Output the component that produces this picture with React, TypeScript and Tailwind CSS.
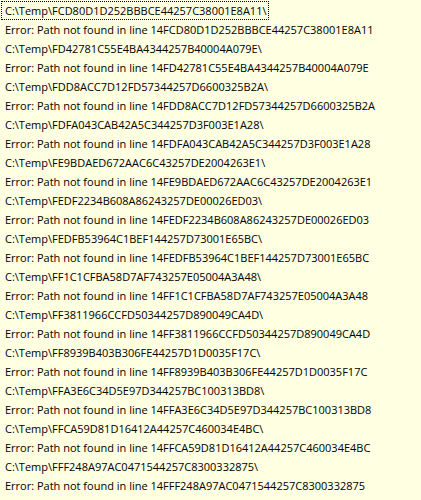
const ids = [
  "FCD80D1D252BBBCE44257C38001E8A11",
  "FD42781C55E4BA4344257B40004A079E",
  "FDD8ACC7D12FD57344257D6600325B2A",
  "FDFA043CAB42A5C344257D3F003E1A28",
  "FE9BDAED672AAC6C43257DE2004263E1",
  "FEDF2234B608A86243257DE00026ED03",
  "FEDFB53964C1BEF144257D73001E65BC",
  "FF1C1CFBA58D7AF743257E05004A3A48",
  "FF3811966CCFD50344257D890049CA4D",
  "FF8939B403B306FE44257D1D0035F17C",
  "FFA3E6C34D5E97D344257BC100313BD8",
  "FFCA59D81D16412A44257C460034E4BC",
  "FFF248A97AC0471544257C8300332875",
];

const lines = ids.flatMap((id) => [
  `C:\\Temp\\${id}\\`,
  `Error: Path not found in line 14${id}`,
]);

const App = () => {
  return (
    <div className="w-[421px] h-[500px] overflow-hidden bg-[#ffffe1] pt-px font-['Open_Sans',sans-serif] text-[11px] text-black whitespace-nowrap">
      {lines.map((line, i) =>
        i === 0 ? (
          <div key={i} className="flex h-[19px] pl-px">
            <span className="h-[19px] leading-[17px] pl-[3px] pr-[2px] border border-dotted border-black">
              {line}
            </span>
          </div>
        ) : (
          <div key={i} className="h-[19px] leading-[19px] pl-[5px]">
            {line}
          </div>
        )
      )}
    </div>
  );
};

export default App;
